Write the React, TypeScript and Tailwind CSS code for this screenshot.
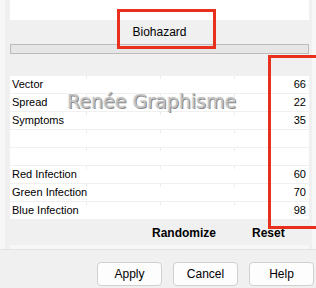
import React from 'react';

const rows = [
  { label: 'Vector', value: '66' },
  { label: 'Spread', value: '22' },
  { label: 'Symptoms', value: '35' },
  { label: '', value: '' },
  { label: '', value: '' },
  { label: 'Red Infection', value: '60' },
  { label: 'Green Infection', value: '70' },
  { label: 'Blue Infection', value: '98' },
];

const Row = ({ label, value }: { label: string; value: string }) => (
  <div className="relative h-[17px] bg-white flex items-center justify-between pl-[2px] pr-[3px] text-[11px] leading-none text-black">
    <span>{label}</span>
    <span>{value}</span>
    <span className="absolute left-[76px] top-0 w-px h-[3px] bg-[#ececec]" />
    <span className="absolute left-[150px] top-0 w-px h-[3px] bg-[#ececec]" />
    <span className="absolute left-[224px] top-0 w-px h-[3px] bg-[#ececec]" />
  </div>
);

const Btn = ({ children }: { children: React.ReactNode }) => (
  <button className="w-[65px] h-[24px] rounded-[4px] border border-[#d0d0d0] bg-[#fdfdfd] text-[12px] text-black flex items-center justify-center">
    {children}
  </button>
);

export default function App() {
  return (
    <div
      className="relative w-[316px] h-[288px] overflow-hidden bg-[#f0f0f0]"
      style={{ fontFamily: '"Liberation Sans", Arial, sans-serif' }}
    >
      <div className="flex h-[250px] border-b border-[#e3e3e3] bg-[#f7f7f7]">
        <div className="w-[5px]" />
        <div className="w-[5px] bg-[#f0f0f0]" />
        <div className="flex-1 flex flex-col">
          <div className="h-[20px] bg-white" />
          <div className="h-[56px] bg-[#f0f0f0] flex flex-col">
            <div className="h-[24px] flex items-center justify-center text-[12px] text-black leading-none">
              <span>Biohazard</span>
            </div>
            <div className="h-[10px] border border-[#bcbcbc] bg-[#e6e6e6]" />
          </div>
          <div className="flex flex-col gap-px bg-[#f0f0f0]">
            {rows.map((r, i) => (
              <Row key={i} label={r.label} value={r.value} />
            ))}
          </div>
          <div className="h-[26px] pt-[2px] bg-[#f0f0f0] flex items-center text-[12px] font-bold text-black">
            <span className="ml-[142px]">Randomize</span>
            <span className="ml-[36px]">Reset</span>
          </div>
        </div>
        <div className="w-[3px] bg-[#f0f0f0]" />
        <div className="w-[4px]" />
      </div>

      <div className="flex justify-end gap-[11px] pr-[2px] pt-[12px]">
        <Btn>Apply</Btn>
        <Btn>Cancel</Btn>
        <Btn>Help</Btn>
      </div>

      {/* watermark */}
      <div
        className="absolute left-[67px] top-[87px] text-[19px] text-[#c4c4c4] whitespace-nowrap pointer-events-none"
        style={{
          fontFamily: '"DejaVu Sans", Verdana, sans-serif',
          textShadow: '1px 1px 0 #8a8a8a, -1px -1px 0 #fafafa, 0 0 1px #777',
        }}
      >
        Renée Graphisme
      </div>

      {/* annotation boxes */}
      <div className="absolute left-[117px] top-[9px] w-[99px] h-[40px] border-[3px] border-[#e8301c]" />
      <div className="absolute left-[268px] top-[55px] w-[60px] h-[174px] border-[3px] border-[#e8301c]" />
    </div>
  );
}
